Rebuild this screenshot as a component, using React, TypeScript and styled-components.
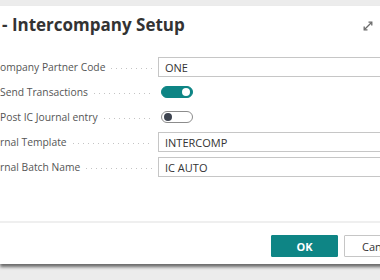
import styled, { createGlobalStyle } from "styled-components";

const Global = createGlobalStyle`
  html, body {
    margin: 0;
    padding: 0;
    background: #ececec;
    overflow: hidden;
    font-family: "Open Sans", "Liberation Sans", sans-serif;
  }
`;

const Page = styled.div`
  width: 380px;
  height: 280px;
  overflow: hidden;
  padding-top: 6px;
  box-sizing: border-box;
`;

const Dialog = styled.div`
  width: 430px;
  height: 258px;
  background: #fff;
  box-shadow: 0 3px 3px rgba(0, 0, 0, 0.55);
  display: flex;
  flex-direction: column;
  box-sizing: border-box;
  padding-right: 16px;
`;

const Header = styled.div`
  display: flex;
  align-items: center;
  justify-content: space-between;
  height: 37px;
  padding: 0 0 0 2px;
  box-sizing: border-box;
`;

const Title = styled.h1`
  margin: 0;
  font-size: 17px;
  font-weight: 700;
  color: #333;
`;

const ExpandButton = styled.span`
  display: flex;
  margin-right: 40px;
  margin-top: 2px;
`;

const Fields = styled.div`
  display: flex;
  flex-direction: column;
  gap: 5px;
  padding-top: 14px;
`;

const Row = styled.div`
  display: grid;
  grid-template-columns: 152px 1fr;
  column-gap: 6px;
  align-items: center;
  height: 20px;
`;

const LabelCell = styled.div`
  display: flex;
  align-items: center;
  gap: 6px;
  min-width: 0;
`;

const Label = styled.span`
  font-size: 10.3px;
  color: #555;
  white-space: nowrap;
`;

const Leader = styled.span`
  flex: 1;
  height: 1px;
  margin-top: 3px;
  background-image: linear-gradient(to right, #c4c4c4 1px, transparent 1px);
  background-size: 5px 1px;
  background-repeat: repeat-x;
`;

const Input = styled.div`
  height: 20px;
  box-sizing: border-box;
  border: 1px solid #c6c6c6;
  padding: 0 6px;
  display: flex;
  align-items: center;
  font-size: 11px;
  color: #333;
`;

const Toggle = styled.span<{ $on?: boolean }>`
  width: 32px;
  height: 12px;
  box-sizing: border-box;
  border-radius: 6px;
  margin-left: 3px;
  display: flex;
  align-items: center;
  justify-content: ${(p) => (p.$on ? "flex-end" : "flex-start")};
  padding: 0 2px;
  background: ${(p) => (p.$on ? "#0e8585" : "#fff")};
  border: 1px solid ${(p) => (p.$on ? "#0e8585" : "#8c8c8c")};

  &::after {
    content: "";
    width: 8px;
    height: 8px;
    border-radius: 50%;
    background: ${(p) => (p.$on ? "#fff" : "#3e4450")};
  }
`;

const Spacer = styled.div`
  flex: 1;
`;

const Footer = styled.div`
  border-top: 2px solid #efefef;
  display: flex;
  justify-content: flex-end;
  gap: 6px;
  padding: 12px 0 0;
  height: 43px;
  box-sizing: border-box;
`;

const Button = styled.button<{ $primary?: boolean }>`
  min-width: 67px;
  height: 22px;
  padding: 0 17px;
  font-family: inherit;
  font-size: 11px;
  font-weight: ${(p) => (p.$primary ? 700 : 400)};
  color: ${(p) => (p.$primary ? "#fff" : "#333")};
  background: ${(p) => (p.$primary ? "#0e8585" : "#fff")};
  border: 1px solid ${(p) => (p.$primary ? "#0e8585" : "#c6c6c6")};
  border-radius: 1px;
`;

function ExpandIcon() {
  return (
    <svg width="12" height="12" viewBox="0 0 12 12" fill="none" stroke="#6a6a6a" strokeWidth="1.3">
      <path d="M2.5 9.5 L9.5 2.5" />
      <path d="M6.5 2.2 H9.8 V5.5" />
      <path d="M2.2 6.5 V9.8 H5.5" />
    </svg>
  );
}

const fields = [
  { label: "ompany Partner Code", value: "ONE" },
  { label: "Send Transactions", toggle: true, on: true },
  { label: "Post IC Journal entry", toggle: true, on: false },
  { label: "rnal Template", value: "INTERCOMP" },
  { label: "rnal Batch Name", value: "IC AUTO" },
];

export default function App() {
  return (
    <>
      <Global />
      <Page>
        <Dialog>
          <Header>
            <Title>- Intercompany Setup</Title>
            <ExpandButton>
              <ExpandIcon />
            </ExpandButton>
          </Header>
          <Fields>
            {fields.map((f) => (
              <Row key={f.label}>
                <LabelCell>
                  <Label>{f.label}</Label>
                  <Leader />
                </LabelCell>
                {f.toggle ? <Toggle $on={f.on} /> : <Input>{f.value}</Input>}
              </Row>
            ))}
          </Fields>
          <Spacer />
          <Footer>
            <Button $primary>OK</Button>
            <Button>Cancel</Button>
          </Footer>
        </Dialog>
      </Page>
    </>
  );
}
